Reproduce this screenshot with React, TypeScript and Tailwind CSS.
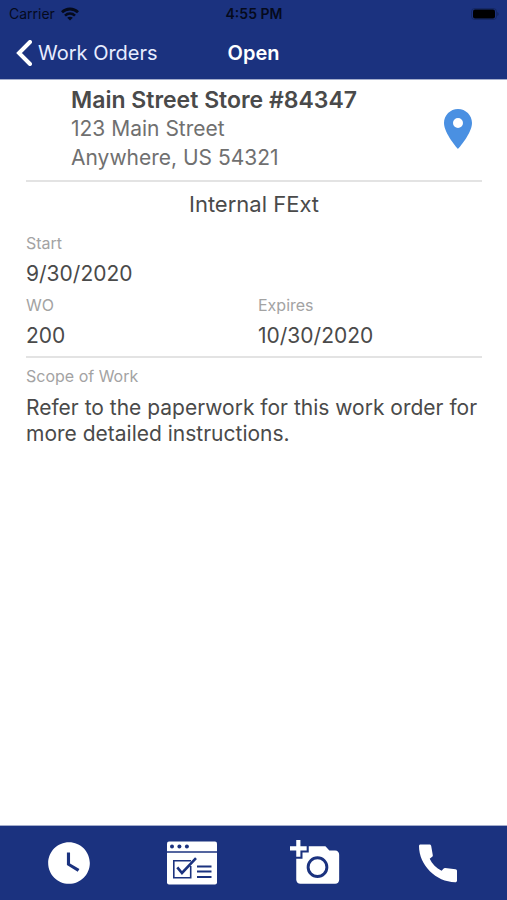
import { MdPlace, MdWatchLater } from "react-icons/md";

const workOrder = {
	store: "Main Street Store #84347",
	street: "123 Main Street",
	city: "Anywhere, US 54321",
	type: "Internal FExt",
	start: "9/30/2020",
	number: "200",
	expires: "10/30/2020",
	scope: "Refer to the paperwork for this work order for more detailed instructions.",
};

function WifiIcon() {
	return (
		<svg width="18" height="14" viewBox="0 0 18 14" fill="none" stroke="currentColor" aria-hidden="true">
			<path d="M1 5.2C5.5.9 12.5.9 17 5.2" strokeWidth="2.8" />
			<path d="M4 8.6c2.9-2.7 7.1-2.7 10 0" strokeWidth="2.6" />
			<path d="M9 13.5 6.2 10.7c1.6-1.4 4-1.4 5.6 0z" fill="currentColor" stroke="none" />
		</svg>
	);
}

function BatteryIcon() {
	return (
		<svg width="28" height="12" viewBox="0 0 28 12" aria-hidden="true">
			<rect x="0.5" y="0.5" width="25" height="11" rx="3" fill="none" stroke="#000" strokeOpacity="0.2" />
			<rect x="2" y="1.5" width="22" height="9" rx="2" fill="#000" />
			<path d="M26.5 4c1.3.5 1.3 3.5 0 4z" fill="#000" fillOpacity="0.4" />
		</svg>
	);
}

function BackIcon() {
	return (
		<svg width="16" height="26" viewBox="0 0 16 26" fill="none" aria-hidden="true">
			<path d="M14 2 3 13l11 11" stroke="#fff" strokeWidth="4" strokeLinecap="round" />
		</svg>
	);
}

function FormIcon() {
	return (
		<svg width="50" height="50" viewBox="0 0 50 50" fill="none" stroke="#1b327f" aria-hidden="true">
			<rect y="3.5" width="50" height="43" rx="2" fill="#fff" stroke="none" />
			<path d="M0 14h50" strokeWidth="1.5" />
			<g fill="#1b327f" stroke="none">
				<circle cx="5" cy="8.6" r="2" />
				<circle cx="12.4" cy="8.6" r="2" />
				<circle cx="19.9" cy="8.6" r="2" />
			</g>
			<path d="M24 22.7H6.8v17h16.9V28" strokeWidth="1.6" />
			<path d="m10.3 29.3 4.7 5.7L29 20.2" strokeWidth="2.6" />
			<path d="M30 28.4h14.5M30 33.6h14.5M30 39h14.5" strokeWidth="2" />
		</svg>
	);
}

function CameraIcon() {
	return (
		<svg width="50" height="50" viewBox="0 0 24 24" fill="currentColor" aria-hidden="true">
			<path d="M3 4V1h2v3h3v2H5v3H3V6H0V4z" />
			<path
				fillRule="evenodd"
				d="M6 10V7h3V4h8l1.9 2h2.8c1.1 0 1.9.9 1.9 2v12c0 1.100-.8 2-1.900 2H5c-1.100 0-2-.9-2-2V10zm7.200 9.200a5.200 5.200 0 1 0 0-10.400 5.200 5.200 0 0 0 0 10.400zm0-1.400a3.800 3.800 0 1 1 0-7.600 3.800 3.800 0 0 1 0 7.600z"
			/>
		</svg>
	);
}

function PhoneIcon() {
	return (
		<svg width="50" height="50" viewBox="0 0 50 50" fill="currentColor" aria-hidden="true">
			<path d="M7.500 6.500h9c.9 0 1.600.6 1.700 1.500l1.600 9.200c.1.700-.1 1.200-.6 1.600l-2.500 2c2.500 5.200 6.500 9.300 11.900 12l2.100-2.200c.4-.4.9-.6 1.500-.5l10.300 1.200c.9.1 1.500.8 1.500 1.700v9.400c0 1.100-.7 1.800-1.800 1.800C23 44 6 27 6 8c0-.9.600-1.500 1.500-1.500z" />
		</svg>
	);
}

function Field({ label, value }: { label: string; value: string }) {
	return (
		<div>
			<dt className="text-base leading-6 text-[#a3a3a3]">{label}</dt>
			<dd className="text-[21px] leading-[38px]">{value}</dd>
		</div>
	);
}

const actions = [
	{ label: "Time", icon: <MdWatchLater size={50} /> },
	{ label: "Forms", icon: <FormIcon /> },
	{ label: "Add photo", icon: <CameraIcon /> },
	{ label: "Call", icon: <PhoneIcon /> },
];

export default function App() {
	return (
		<div className="flex min-h-screen flex-col bg-white font-['Inter',sans-serif] text-[#4a4a4a]">
			<header className="border-b border-[#a4adcc] bg-[#1b327f]">
				<div className="grid h-7 grid-cols-3 items-center pr-2 pl-[9px] text-sm text-[#050a1c]">
					<div className="flex items-center gap-1.5">
						Carrier <WifiIcon />
					</div>
					<div className="text-center font-semibold">4:55 PM</div>
					<div className="flex justify-end">
						<BatteryIcon />
					</div>
				</div>
				<div className="grid h-[51px] grid-cols-[1fr_auto_1fr] items-center px-4 pb-0.5 text-xl text-white">
					<a href="#work-orders" className="flex items-center gap-1.5 text-[#e8edff]">
						<BackIcon /> Work Orders
					</a>
					<h1 className="font-semibold">Open</h1>
				</div>
			</header>
			<main className="flex-1 pt-1.5 pr-[25px] pl-[26px]">
				<section className="flex items-center justify-between border-b-2 border-[#e3e3e3] pb-2">
					<div className="pl-[45px] text-[21px] leading-[29px] text-[#707070]">
						<h2 className="text-[23px] leading-7 font-semibold text-[#4a4a4a]">{workOrder.store}</h2>
						<p>{workOrder.street}</p>
						<p>{workOrder.city}</p>
					</div>
					<button type="button" aria-label="Show on map" className="text-[#4a90e2]">
						<MdPlace size={48} />
					</button>
				</section>
				<h3 className="mt-[7px] mb-3 text-center text-[22px] leading-[30px]">{workOrder.type}</h3>
				<dl className="border-b-2 border-[#e3e3e3] pb-px">
					<Field label="Start" value={workOrder.start} />
					<div className="grid grid-cols-2 gap-2">
						<Field label="WO" value={workOrder.number} />
						<Field label="Expires" value={workOrder.expires} />
					</div>
				</dl>
				<h3 className="mt-1.5 text-base leading-6 text-[#a3a3a3]">Scope of Work</h3>
				<p className="mt-[7px] text-[21px] leading-[26px]">{workOrder.scope}</p>
			</main>
			<footer className="grid grid-cols-4 border-t border-[#a4adcc] bg-[#1b327f] px-[7px] py-3 text-white">
				{actions.map((action) => (
					<button key={action.label} type="button" aria-label={action.label} className="flex justify-center">
						{action.icon}
					</button>
				))}
			</footer>
		</div>
	);
}
